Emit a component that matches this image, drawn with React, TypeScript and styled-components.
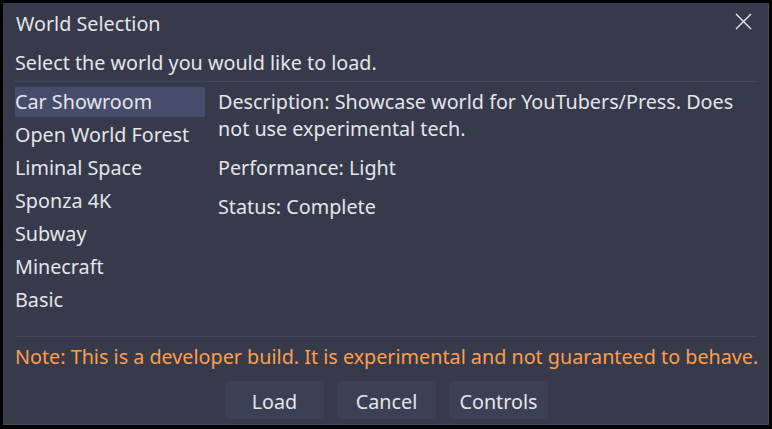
import styled, { createGlobalStyle } from "styled-components";

const GlobalStyle = createGlobalStyle`
  html, body {
    margin: 0;
    padding: 0;
    background: #000;
  }
  body {
    font-family: "Noto Sans", "Open Sans", sans-serif;
  }
`;

const worlds = [
  "Car Showroom",
  "Open World Forest",
  "Liminal Space",
  "Sponza 4K",
  "Subway",
  "Minecraft",
  "Basic",
];

const Frame = styled.div`
  width: 772px;
  height: 429px;
  box-sizing: border-box;
  padding: 3px 3px 4px 3px;
  background: #000;
`;

const Panel = styled.div`
  height: 100%;
  box-sizing: border-box;
  background: #363a4b;
  border-right: 1px solid #444a62;
  border-bottom: 1px solid #444a62;
  display: flex;
  flex-direction: column;
  color: #e4e5ea;
  font-size: 19.75px;
`;

const TitleBar = styled.div`
  height: 42px;
  display: flex;
  align-items: center;
  justify-content: space-between;
  padding: 0 16px 0 13px;
  flex-shrink: 0;
`;

const Title = styled.span`
  line-height: 42px;
`;

const CloseButton = styled.button`
  background: none;
  border: none;
  padding: 0;
  width: 17px;
  height: 17px;
  margin-top: -6px;
  display: flex;
  cursor: pointer;
`;

const Content = styled.div`
  flex: 1;
  display: flex;
  flex-direction: column;
  padding: 5px 11px 5px 12px;
  min-height: 0;
`;

const Prompt = styled.div`
  line-height: 26px;
  height: 26px;
  white-space: nowrap;
`;

const Separator = styled.div`
  height: 1px;
  background: #444a62;
  margin: 5px 0;
  flex-shrink: 0;
`;

const Body = styled.div`
  flex: 1;
  display: flex;
  gap: 13px;
  min-height: 0;
`;

const WorldList = styled.ul`
  list-style: none;
  margin: 0;
  padding: 0;
  width: 190px;
  display: flex;
  flex-direction: column;
  gap: 3px;
  flex-shrink: 0;
`;

const WorldItem = styled.li<{ $selected?: boolean }>`
  height: 30px;
  line-height: 30px;
  white-space: nowrap;
  background: ${(p) => (p.$selected ? "#464d6b" : "transparent")};
`;

const Details = styled.div`
  flex: 1;
  display: flex;
  flex-direction: column;
  gap: 12px;
  padding-top: 1px;
`;

const DetailText = styled.p`
  margin: 0;
  line-height: 27px;
`;

const Note = styled.div`
  color: #ff9d48;
  line-height: 26px;
  margin-top: 2px;
  white-space: nowrap;
`;

const ButtonRow = styled.div`
  display: flex;
  justify-content: center;
  gap: 13px;
  margin-top: 11px;
  padding-left: 1px;
`;

const DialogButton = styled.button`
  width: 99px;
  height: 38px;
  border: none;
  border-radius: 3px;
  background: #3c4054;
  color: #e4e5ea;
  font-family: "Noto Sans", "Open Sans", sans-serif;
  font-size: 19.75px;
  padding: 2px 0 0;
  cursor: pointer;
`;

const App = () => {
  return (
    <>
      <GlobalStyle />
      <Frame>
        <Panel>
          <TitleBar>
            <Title>World Selection</Title>
            <CloseButton aria-label="Close">
              <svg width="17" height="17" viewBox="0 0 17 17">
                <path
                  d="M1 1 L16 16 M16 1 L1 16"
                  stroke="#e8e8ee"
                  strokeWidth="1.4"
                  fill="none"
                />
              </svg>
            </CloseButton>
          </TitleBar>
          <Content>
            <Prompt>Select the world you would like to load.</Prompt>
            <Separator />
            <Body>
              <WorldList>
                {worlds.map((world, index) => (
                  <WorldItem key={world} $selected={index === 0}>
                    {world}
                  </WorldItem>
                ))}
              </WorldList>
              <Details>
                <DetailText>
                  Description: Showcase world for YouTubers/Press. Does not use
                  experimental tech.
                </DetailText>
                <DetailText>Performance: Light</DetailText>
                <DetailText>Status: Complete</DetailText>
              </Details>
            </Body>
            <Separator />
            <Note>
              Note: This is a developer build. It is experimental and not
              guaranteed to behave.
            </Note>
            <ButtonRow>
              <DialogButton>Load</DialogButton>
              <DialogButton>Cancel</DialogButton>
              <DialogButton>Controls</DialogButton>
            </ButtonRow>
          </Content>
        </Panel>
      </Frame>
    </>
  );
};

export default App;
